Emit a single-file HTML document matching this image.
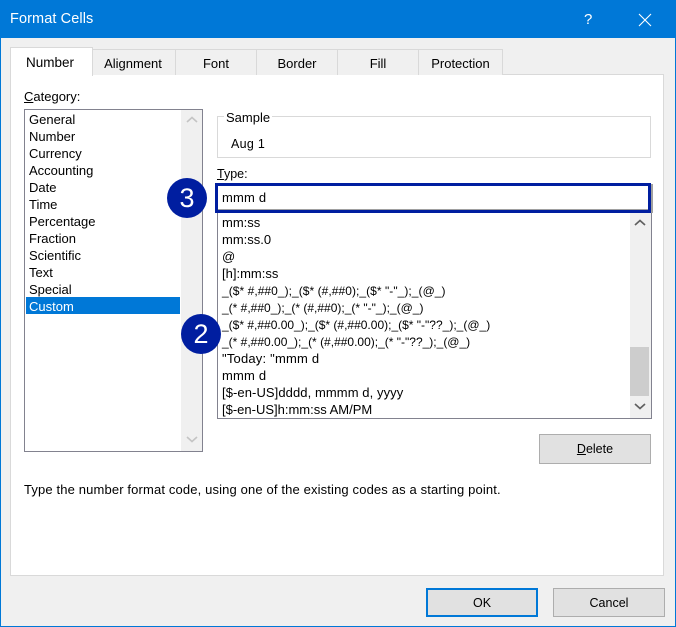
<!DOCTYPE html>
<html><head><meta charset="utf-8">
<style>
html,body{margin:0;padding:0}
body{width:676px;height:627px;position:relative;overflow:hidden;background:#f0f0f0;font-family:"Liberation Sans",sans-serif;font-size:13px;color:#000}
div,svg{position:absolute;box-sizing:border-box}
.t{white-space:nowrap;line-height:17px;height:17px}
.n{font-size:12px}
.tab{top:49px;height:26px;border:1px solid #d9d9d9;border-bottom:none;background:#f0f0f0;text-align:center;line-height:28px;white-space:nowrap;color:#000}
.btn{height:30px;background:#e1e1e1;border:1px solid #adadad;text-align:center;line-height:29px;font-size:12.5px}
u{text-decoration:underline}
</style></head><body>
<div style="left:0;top:0;width:676px;height:38px;background:#0078d7"></div>
<div style="left:0;top:0;width:1px;height:627px;background:#0078d7"></div>
<div style="right:0;top:0;width:1px;height:627px;background:#0078d7"></div>
<div style="left:0;bottom:0;width:676px;height:1px;background:#0078d7"></div>
<div class="t" style="left:10px;top:11px;color:#fff;font-size:14.5px;letter-spacing:.1px">Format Cells</div>
<div class="t" style="left:584px;top:11px;color:#fff;font-size:15px">?</div>
<svg style="left:638px;top:13px" width="14" height="14"><path d="M1 1L13 13M13 1L1 13" stroke="#fff" stroke-width="1.1" fill="none"/></svg>

<div style="left:10px;top:74px;width:654px;height:502px;background:#fff;border:1px solid #d9d9d9"></div>
<div class="tab" style="left:92px;width:84px;padding-right:2px">Alignment</div>
<div class="tab" style="left:175px;width:82px">Font</div>
<div class="tab" style="left:256px;width:82px">Border</div>
<div class="tab" style="left:337px;width:82px">Fill</div>
<div class="tab" style="left:418px;width:85px">Protection</div>
<div style="left:10px;top:47px;width:83px;height:29px;background:#fff;border:1px solid #d9d9d9;border-bottom:none;text-align:center;line-height:29px;font-size:13.5px;padding-right:3px">Number</div>

<div class="t" style="left:24px;top:88px"><u>C</u>ategory:</div>

<div style="left:24px;top:109px;width:179px;height:343px;border:1px solid #82828f;background:#fff"></div>
<div style="left:181px;top:110px;width:21px;height:341px;background:#f0f0f0"></div>
<svg style="left:184px;top:114px" width="16" height="12"><path d="M3 8L8 3.5L13 8" stroke="#c4c4c4" stroke-width="1.6" fill="none"/></svg>
<svg style="left:184px;top:433px" width="16" height="12"><path d="M3 4L8 8.5L13 4" stroke="#c4c4c4" stroke-width="1.6" fill="none"/></svg>
<div class="t" style="left:29px;top:111px">General</div>
<div class="t" style="left:29px;top:128px">Number</div>
<div class="t" style="left:29px;top:145px">Currency</div>
<div class="t" style="left:29px;top:162px">Accounting</div>
<div class="t" style="left:29px;top:179px">Date</div>
<div class="t" style="left:29px;top:196px">Time</div>
<div class="t" style="left:29px;top:213px">Percentage</div>
<div class="t" style="left:29px;top:230px">Fraction</div>
<div class="t" style="left:29px;top:247px">Scientific</div>
<div class="t" style="left:29px;top:264px">Text</div>
<div class="t" style="left:29px;top:281px">Special</div>
<div style="left:26px;top:297px;width:154px;height:17px;background:#0078d7"></div>
<div class="t" style="left:29px;top:298px;color:#fff">Custom</div>

<div style="left:217px;top:116px;width:434px;height:42px;border:1px solid #d9d9d9"></div>
<div class="t" style="left:224px;top:109px;background:#fff;padding:0 2px;height:15px">Sample</div>
<div class="t" style="left:231px;top:136px;font-size:12.5px;letter-spacing:.3px">Aug 1</div>

<div class="t" style="left:217px;top:166px;font-size:12.5px"><u>T</u>ype:</div>

<div style="left:217px;top:212px;width:435px;height:207px;border:1px solid #82828f;border-top:none;background:#fff"></div>
<div style="left:630px;top:213px;width:21px;height:205px;background:#f0f0f0"></div>
<div style="left:630px;top:347px;width:19px;height:49px;background:#cdcdcd"></div>
<svg style="left:632px;top:217px;" width="16" height="12"><path d="M3 8L8 3.5L13 8" stroke="#606060" stroke-width="1.7" fill="none"/></svg>
<svg style="left:632px;top:400px" width="16" height="12"><path d="M3 4L8 8.5L13 4" stroke="#606060" stroke-width="1.7" fill="none"/></svg>

<div class="t" style="left:222px;top:214px">mm:ss</div>
<div class="t" style="left:222px;top:231px">mm:ss.0</div>
<div class="t" style="left:222px;top:248px">@</div>
<div class="t" style="left:222px;top:265px">[h]:mm:ss</div>
<div class="t n" style="left:222px;top:283px;letter-spacing:.05px">_($* #,##0_);_($* (#,##0);_($* "-"_);_(@_)</div>
<div class="t n" style="left:222px;top:300px">_(* #,##0_);_(* (#,##0);_(* "-"_);_(@_)</div>
<div class="t n" style="left:222px;top:317px">_($* #,##0.00_);_($* (#,##0.00);_($* "-"??_);_(@_)</div>
<div class="t n" style="left:222px;top:334px">_(* #,##0.00_);_(* (#,##0.00);_(* "-"??_);_(@_)</div>
<div class="t" style="left:222px;top:350px;letter-spacing:.2px">"Today: "mmm d</div>
<div class="t" style="left:222px;top:367px;letter-spacing:.2px">mmm d</div>
<div class="t" style="left:222px;top:384px;letter-spacing:.08px">[$-en-US]dddd, mmmm d, yyyy</div>
<div class="t" style="left:222px;top:401px">[$-en-US]h:mm:ss AM/PM</div>

<div style="left:215px;top:183px;width:436px;height:30px;background:#fff;border:3px solid #001ea0"></div>
<div style="left:218px;top:209px;width:430px;height:1px;background:#a0a0a0"></div>
<div style="left:651px;top:184px;width:2px;height:29px;background:#a0a0a0"></div>
<div class="t" style="left:222px;top:189px;letter-spacing:.2px">mmm d</div>

<div style="left:167px;top:178px;width:40px;height:40px;border-radius:50%;background:#001ea0;color:#fff;font-size:27px;line-height:41px;text-align:center">3</div>
<div style="left:181px;top:314px;width:40px;height:40px;border-radius:50%;background:#001ea0;color:#fff;font-size:27px;line-height:41px;text-align:center">2</div>

<div class="btn" style="left:539px;top:434px;width:112px"><u>D</u>elete</div>
<div class="t" style="left:24px;top:481px;letter-spacing:.14px">Type the number format code, using one of the existing codes as a starting point.</div>

<div class="btn" style="left:426px;top:588px;width:112px;height:29px;border:2px solid #0078d7;line-height:27px">OK</div>
<div class="btn" style="left:553px;top:588px;width:112px;height:29px;line-height:28px">Cancel</div>
</body></html>
